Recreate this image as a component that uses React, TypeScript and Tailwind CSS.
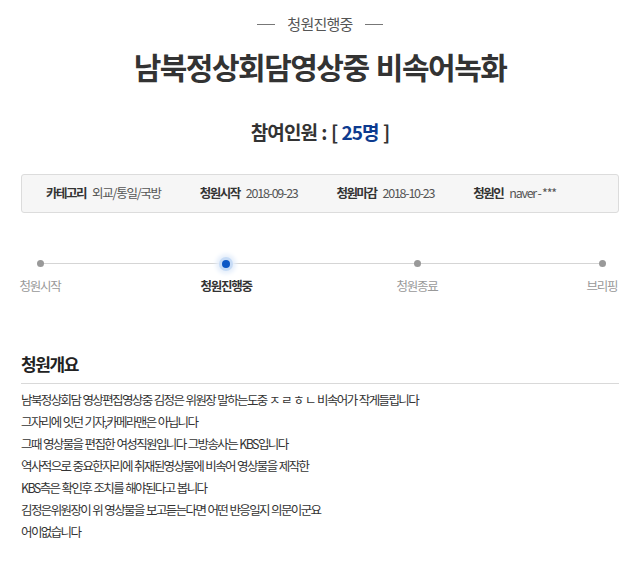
import React from 'react';

const font = "font-['Noto_Sans_CJK_KR','Noto_Sans',sans-serif]";

const steps = [
  { label: '청원시작', current: false, gap: 'ml-0' },
  { label: '청원진행중', current: true, gap: 'ml-[148px]' },
  { label: '청원종료', current: false, gap: 'ml-[153px]' },
  { label: '브리핑', current: false, gap: 'ml-[149px]' },
];

const info = [
  { label: '카테고리', value: '외교/통일/국방' },
  { label: '청원시작', value: '2018-09-23' },
  { label: '청원마감', value: '2018-10-23' },
  { label: '청원인', value: 'naver - ***' },
];

const body = [
  '남북정상회담 영상편집영상중 김정은 위원장 말하는도중 ㅈ ㄹ ㅎ ㄴ 비속어가 작게들립니다',
  '그자리에 잇던 기자,카메라맨은 아닙니다',
  '그때 영상물을 편집한 여성직원입니다 그방송사는 KBS입니다',
  '역사적으로 중요한자리에 취재된영상물에 비속어 영상물을 제작한',
  'KBS측은 확인후 조치를 해야된다고 봅니다',
  '김정은위원장이 위 영상물을 보고듣는다면 어떤 반응일지 의문이군요',
  '어이없습니다',
];

export default function App() {
  return (
    <div className={`${font} w-[640px] h-[563px] bg-white px-[21px] text-[#333]`}>
      <div className="pt-[12px] flex items-center justify-center gap-[12px] text-[15px] leading-[24px] text-[#555] tracking-[-0.05em]">
        <span className="w-[18px] h-px bg-[#777]" />
        <span>청원진행중</span>
        <span className="w-[18px] h-px bg-[#777]" />
      </div>
      <h1 className="mt-[10px] text-center text-[30px] leading-[40px] font-bold tracking-[-0.05em] [word-spacing:2px] text-[#333]">
        남북정상회담영상중 비속어녹화
      </h1>
      <p className="mt-[31px] text-center text-[19px] leading-[30px] font-bold tracking-[-0.05em] [word-spacing:1px] text-[#333]">
        참여인원 : [ <span className="text-[#0d3b8f]">25명</span> ]
      </p>

      <div className="mt-[27px] h-[39px] rounded-[3px] border border-[#dcdcdc] bg-[#f6f6f6] flex items-center pl-[24px] gap-[39px] text-[12.5px]">
        {info.map((it) => (
          <div key={it.label} className="flex items-center gap-[6px] whitespace-nowrap">
            <span className="font-bold text-[#333] tracking-[-0.12em]">{it.label}</span>
            <span className="text-[#555] tracking-[-0.1em]">{it.value}</span>
          </div>
        ))}
      </div>

      <div className="relative mt-[46px] flex">
        <div className="absolute left-[19px] right-[16px] top-[4px] h-px bg-[#d5d5d5]" />
        {steps.map((s) => (
          <div key={s.label} className={`relative w-[38px] flex flex-col items-center ${s.gap}`}>
            <div className="h-[9px] flex items-center justify-center">
              {s.current ? (
                <span className="w-[8px] h-[8px] rounded-full bg-[#0b57c5] shadow-[0_0_0_3px_#c6dbf6,0_0_4px_6px_#e6effb]" />
              ) : (
                <span className="w-[7px] h-[7px] rounded-full bg-[#999]" />
              )}
            </div>
            <span
              className={`mt-[6px] whitespace-nowrap text-[12.5px] leading-[24px] tracking-[-0.1em] ${
                s.current ? 'font-bold text-[#333]' : 'text-[#999]'
              }`}
            >
              {s.label}
            </span>
          </div>
        ))}
      </div>

      <h2 className="mt-[53px] text-[17px] leading-[26px] font-bold tracking-[-0.08em] text-[#222] pb-[6px] border-b border-[#d9d9d9]">
        청원개요
      </h2>
      <div className="mt-[5px] text-[12.5px] leading-[22px] tracking-[-0.13em] [word-spacing:1px] text-[#333]">
        {body.map((l) => (
          <p key={l}>{l}</p>
        ))}
      </div>
    </div>
  );
}
